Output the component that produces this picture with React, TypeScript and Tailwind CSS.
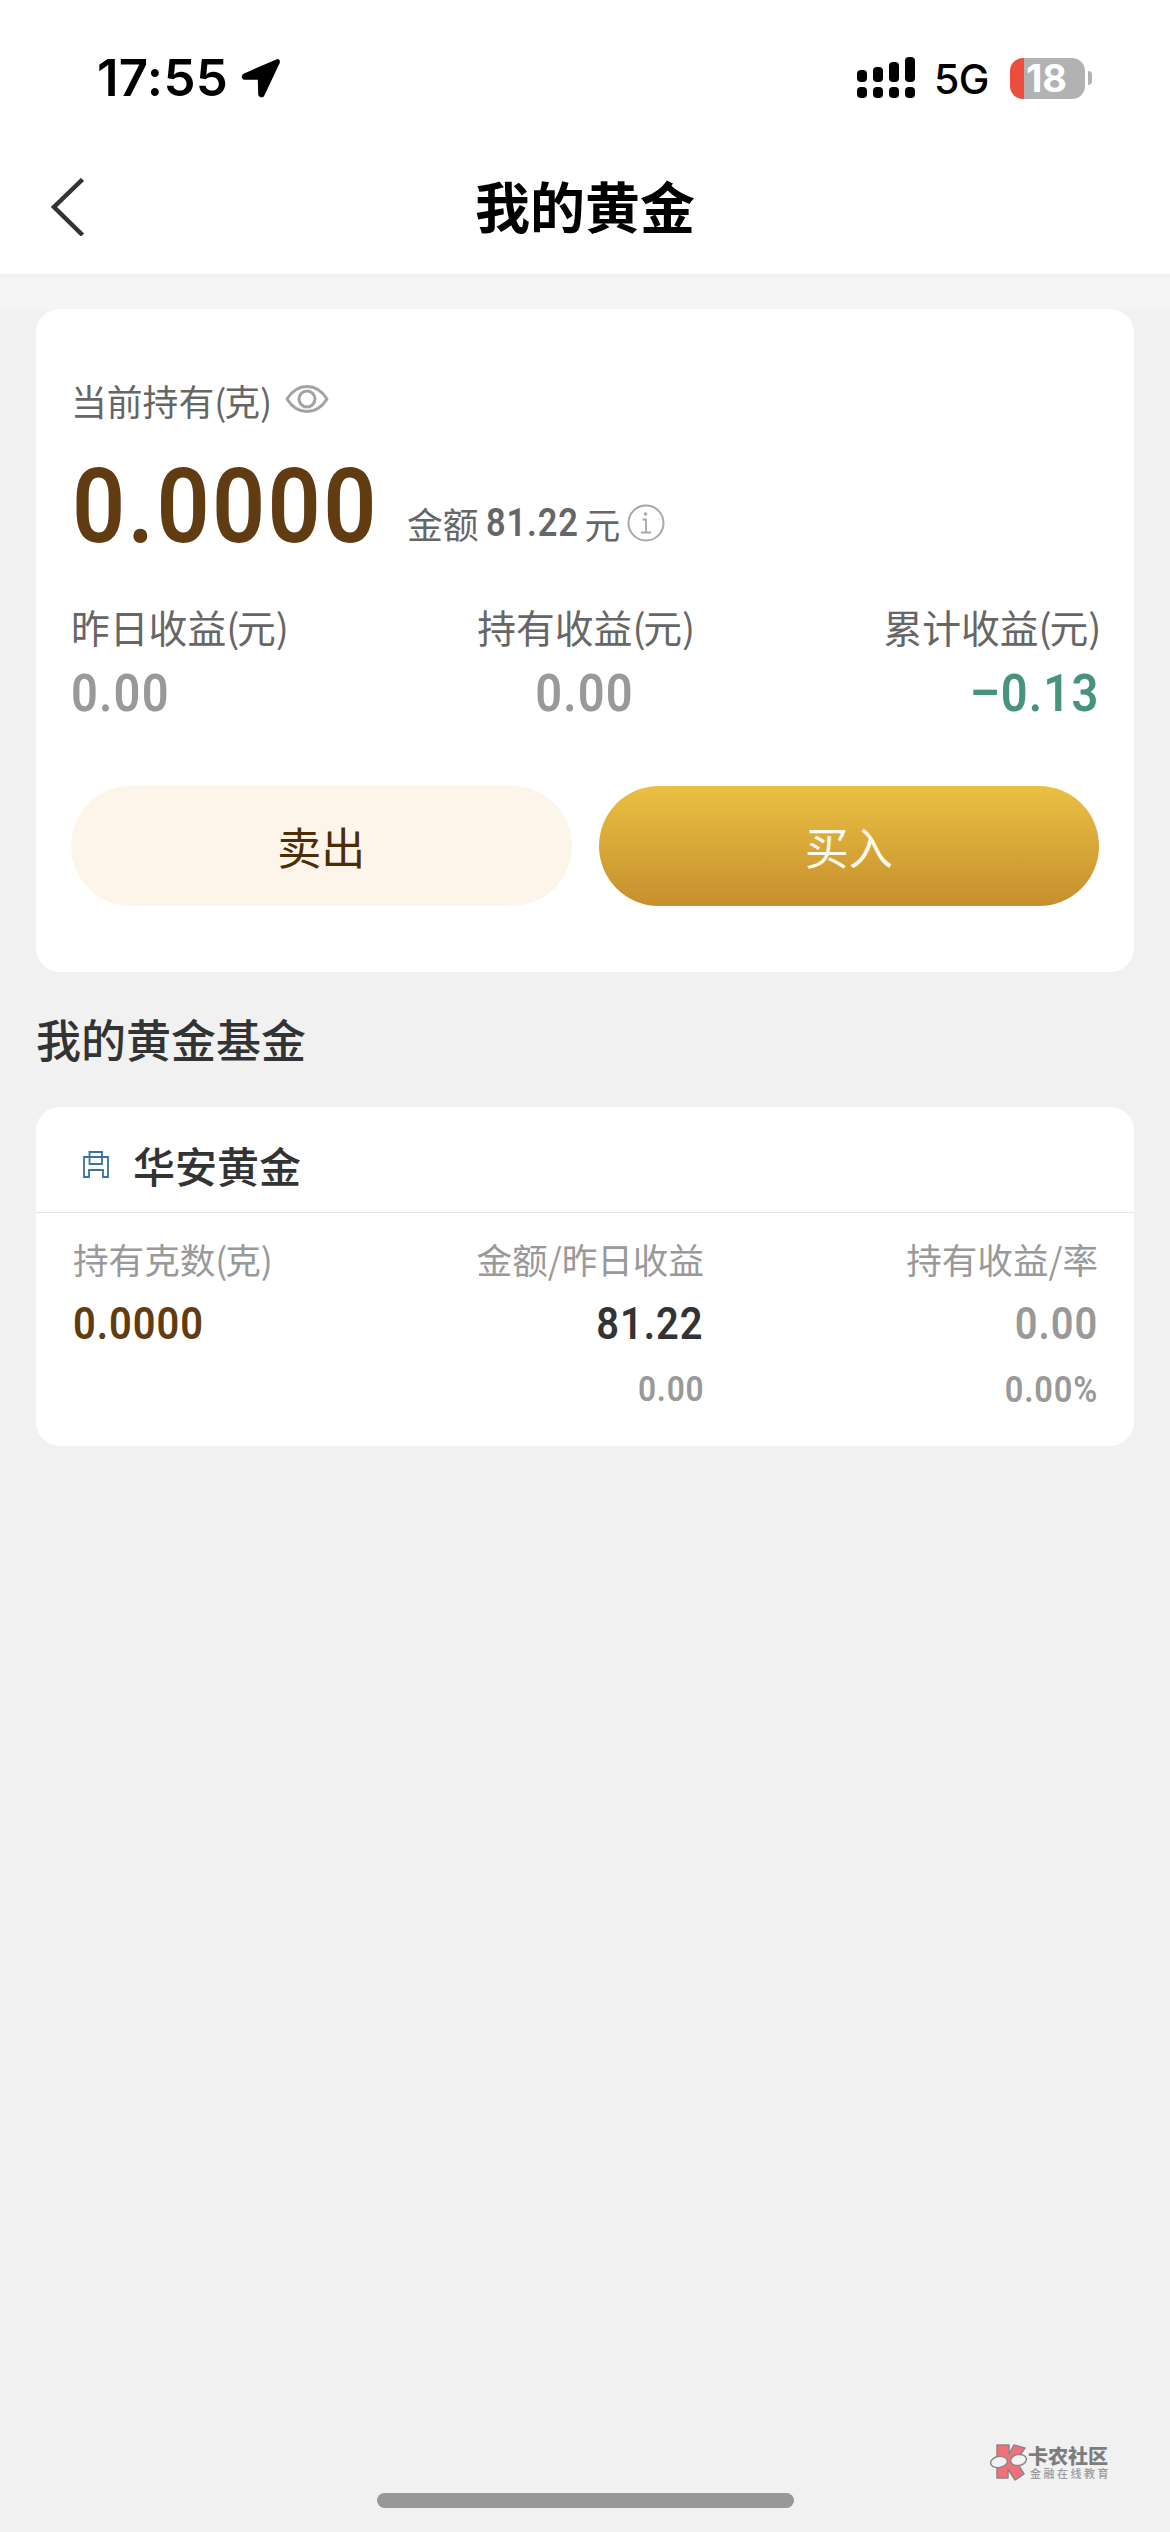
import React from "react";

const CJK = "font-['Noto_Sans_CJK_SC',sans-serif]";

type NumProps = { children: React.ReactNode; className?: string };

/** Narrow DIN-like figures. */
function Num({ children, className = "" }: NumProps) {
  return (
    <span
      className={`inline-block scale-x-[0.905] whitespace-nowrap font-['Roboto',sans-serif] font-semibold tracking-[0.025em] ${className}`}
    >
      {children}
    </span>
  );
}

/** Chinese label with a unit in tightly set parentheses. */
function UnitLabel({ text, unit }: { text: string; unit: string }) {
  return (
    <>
      {text}
      <span className="tracking-[-0.06em]">(</span>
      {unit}
      <span className="tracking-[-0.06em]">)</span>
    </>
  );
}

function StatusBar() {
  return (
    <div className="flex h-[156px] items-start justify-between pl-[97px] pr-[78px] text-black">
      <div className="flex h-[156px] items-center font-['Inter',sans-serif]">
        <span className="w-[136px] whitespace-nowrap text-[51px] leading-[60px] font-semibold tracking-[0.006em]">17:55</span>
        <svg className="ml-[8px]" width="40" height="40" viewBox="0 0 40 40">
          <path
            d="M36 3 3.800 17c-2 1-1.500 3 .4 3h14.300l.4 15.500c0 2.500 2.300 2.700 3 1L37 4.500c.4-1 0-1.900-1-1.500Z"
            fill="#000"
            stroke="#000"
            strokeWidth="3.500"
            strokeLinejoin="round"
          />
        </svg>
      </div>
      <div className="flex h-[156px] items-center">
        <svg width="58" height="42" viewBox="0 0 58 42">
          <g fill="#000">
            <rect x="0" y="13" width="10" height="12" rx="4" />
            <rect x="16" y="10" width="10" height="15" rx="4" />
            <rect x="32" y="5" width="10" height="20" rx="4" />
            <rect x="48" y="0" width="10" height="25" rx="4" />
            <rect x="0" y="30" width="10" height="11" rx="4" />
            <rect x="16" y="30" width="10" height="11" rx="4" />
            <rect x="32" y="30" width="10" height="11" rx="4" />
            <rect x="48" y="30" width="10" height="11" rx="4" />
          </g>
        </svg>
        <span className="ml-[19px] w-[59px] pt-[2px] whitespace-nowrap font-['Inter',sans-serif] text-[41px] leading-[50px] font-medium tracking-[-0.015em]">
          5G
        </span>
        <div className="ml-[17px] flex h-[41px] w-[75px] items-center justify-center rounded-[13px] bg-[linear-gradient(to_right,#eb4e3d_14px,#b2b2b2_14px)] pr-[2px] font-['Inter',sans-serif] text-[38px] leading-[48px] font-bold text-white">
          18
        </div>
        <div className="ml-[3px] h-[14px] w-[4px] rounded-r-full bg-[#b2b2b2]" />
      </div>
    </div>
  );
}

function Stat({
  label,
  value,
  align,
  tone,
  origin,
}: {
  label: string;
  value: string;
  align: string;
  tone: string;
  origin: string;
}) {
  return (
    <div className={`flex flex-col ${align}`}>
      <span className="h-[58px] text-[38.8px] leading-[54px] text-[#666]">
        <UnitLabel text={label} unit="元" />
      </span>
      <Num className={`mt-[7px] h-[60px] text-[52px] leading-[60px] ${origin} ${tone}`}>{value}</Num>
    </div>
  );
}

function EyeIcon() {
  return (
    <svg width="44" height="30" viewBox="0 0 44 30" fill="none" stroke="#a3a3a3" strokeWidth="3">
      <path d="M2 15C7 7 14 2.500 22 2.500S37 7 42 15c-5 8-12 12.500-20 12.500S7 23 2 15Z" strokeLinejoin="round" />
      <circle cx="22" cy="15" r="8" />
    </svg>
  );
}

function InfoIcon() {
  return (
    <svg width="38" height="38" viewBox="0 0 38 38" fill="none" stroke="#a8a8a8" strokeWidth="2">
      <circle cx="19" cy="19" r="17.500" />
      <path d="M15.500 15.500h3.500v12.500M14 28.500h10" strokeWidth="1.800" />
      <circle cx="18.500" cy="10" r="1.800" fill="#a8a8a8" stroke="none" />
    </svg>
  );
}

function FundIcon() {
  return (
    <svg width="26" height="28" viewBox="0 0 26 28" fill="none" stroke="#3a72a5" strokeWidth="1.800">
      <path d="M6.500 1h12.500v12H6.500z" />
      <path d="M1 26V6h24v20h-5v-7H6v7z" />
    </svg>
  );
}

function Watermark() {
  return (
    <div className="absolute top-[2443px] left-[990px] flex items-center">
      <svg width="38" height="38" viewBox="0 0 38 38">
        <g stroke="#8d8686" strokeWidth="1.500" strokeLinejoin="round">
          <path d="M7 2h12v9l5-9 11 3-9 13 8 13-9 6-7-11v9H7z" fill="#f27078" />
          <ellipse cx="9" cy="19" rx="8.500" ry="5.500" transform="rotate(-10 9 19)" fill="#f3f3f3" />
          <ellipse cx="28.500" cy="17" rx="8" ry="5.500" transform="rotate(-10 28.500 17)" fill="#f3f3f3" />
        </g>
      </svg>
      <div className="flex flex-col">
        <span className="text-[20px] leading-[20px] font-black whitespace-nowrap text-[#7d7d7d]">卡农社区</span>
        <span className="mt-[1px] ml-[2px] text-[11px] leading-[12px] font-medium tracking-[2.500px] whitespace-nowrap text-[#9a9a9a]">
          金融在线教育
        </span>
      </div>
    </div>
  );
}

export default function App() {
  return (
    <div className={`relative flex h-[2532px] w-[1170px] flex-col overflow-hidden bg-[#f1f1f1] ${CJK}`}>
      <header className="flex h-[274px] flex-col bg-white">
        <StatusBar />
        <div className="grid h-[102px] grid-cols-[1fr_auto_1fr] items-center">
          <svg className="ml-[50px]" width="36" height="58" viewBox="0 0 36 58" fill="none" stroke="#333" strokeWidth="4.500">
            <path d="M32.500 1.500 4 29 32.500 57" />
          </svg>
          <h1 className="pb-[6px] text-[55px] leading-[80px] font-bold text-black">我的黄金</h1>
        </div>
      </header>
      <div className="h-[35px] border-t-[3px] border-[#f0f0f0] bg-[#f5f5f5]" />

      <main className="flex flex-col px-[36px]">
        <section className="flex h-[663px] flex-col rounded-[24px] bg-white px-[35px] pt-[63px]">
          <div className="flex h-[56px] items-center">
            <span className="text-[35.8px] leading-[56px] text-[#666]">
              <UnitLabel text="当前持有" unit="克" />
            </span>
            <span className="mb-[2px] ml-[15px]">
              <EyeIcon />
            </span>
          </div>
          <div className="flex h-[144px] items-start">
            <Num className="mt-[21px] ml-[1px] w-[310px] origin-left text-[103px] leading-[116px] text-[#613c13]">0.0000</Num>
            <div className="ml-[25px] mt-[68px] flex h-[54px] items-center text-[35.8px] leading-[54px] text-[#666]">
              <span>金额</span>
              <Num className="ml-[7px] w-[94px] origin-left text-[38px]">81.22</Num>
              <span className="ml-[5px]">元</span>
              <span className="ml-[7px]">
                <InfoIcon />
              </span>
            </div>
          </div>
          <div className="mt-[27px] grid grid-cols-3">
            <Stat label="昨日收益" value="0.00" align="items-start" origin="origin-left" tone="text-[#999]" />
            <Stat label="持有收益" value="0.00" align="items-center" origin="origin-center" tone="text-[#999]" />
            <Stat label="累计收益" value="–0.13" align="items-end" origin="origin-right" tone="text-[#469479]" />
          </div>
          <div className="mt-[62px] grid grid-cols-2 gap-[27px]">
            <button className="h-[120px] rounded-full bg-[#fdf5ea] text-[44px] leading-[121px] text-[#4d2c06]">卖出</button>
            <button className="h-[120px] rounded-full bg-linear-to-b from-[#eac043] to-[#c68f2d] text-[44px] leading-[121px] text-[#fffaf0]">
              买入
            </button>
          </div>
        </section>

        <h2 className="h-[135px] text-[45px] leading-[133px] font-medium text-[#333]">我的黄金基金</h2>

        <section className="flex h-[339px] flex-col rounded-[24px] bg-white">
          <div className="flex h-[106px] shrink-0 items-center border-b border-[#e5e5e5] pt-[11px] pl-[47px]">
            <FundIcon />
            <h3 className="ml-[24px] text-[42px] leading-[60px] font-medium text-[#333]">华安黄金</h3>
          </div>
          <div className="flex pt-[19px] pr-[36px] pl-[37px] text-[35.6px] leading-[54px] whitespace-nowrap text-[#999]">
            <div className="flex w-[240px] flex-col items-start">
              <span>
                <UnitLabel text="持有克数" unit="克" />
              </span>
              <Num className="mt-[11px] origin-left text-[44px] text-[#613c13]">0.0000</Num>
            </div>
            <div className="flex w-[391px] flex-col items-end">
              <span>金额/昨日收益</span>
              <Num className="mt-[11px] origin-right text-[44px] text-[#333]">81.22</Num>
              <Num className="mt-[12px] origin-right text-[35px]">0.00</Num>
            </div>
            <div className="flex flex-1 flex-col items-end">
              <span>持有收益/率</span>
              <Num className="mt-[11px] origin-right text-[44px]">0.00</Num>
              <Num className="mt-[12px] origin-right text-[36px]">0.00%</Num>
            </div>
          </div>
        </section>
      </main>

      <Watermark />
      <div className="mx-auto mt-auto mb-[24px] h-[15px] w-[417px] rounded-full bg-[#989898]" />
    </div>
  );
}
